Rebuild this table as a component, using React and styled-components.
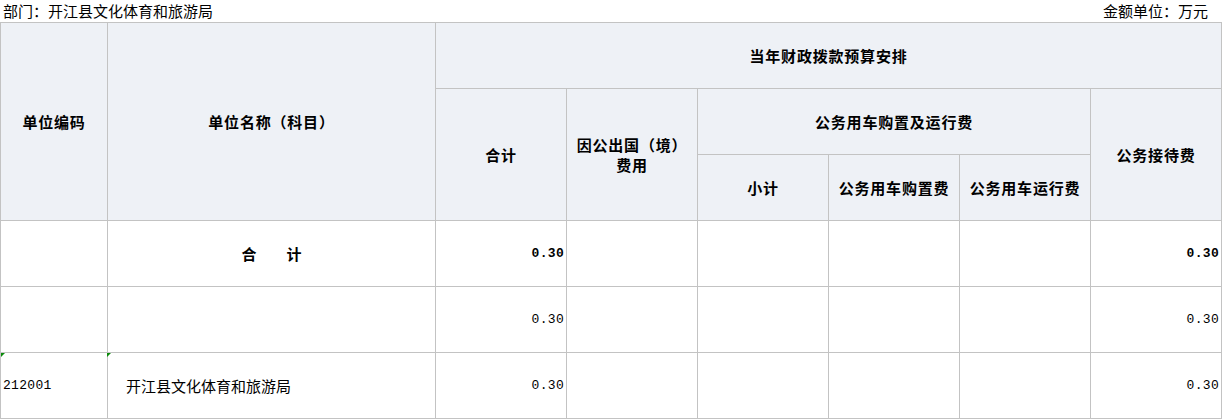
import React from "react";
import styled, { createGlobalStyle } from "styled-components";

const Global = createGlobalStyle`
  html, body { margin: 0; padding: 0; background: #fff; }
  body { font-family: "Noto Sans CJK SC", "Liberation Sans", sans-serif; color: #000; }
`;

const Page = styled.div`
  width: 1222px;
`;

const TitleBar = styled.div`
  height: 22px;
  display: flex;
  align-items: center;
  justify-content: space-between;
  padding: 0 14px 0 3px;
  font-size: 15px;
  line-height: 22px;
  box-sizing: border-box;
`;

const Grid = styled.div`
  display: grid;
  grid-template-columns: 106px 327px repeat(6, 130px);
  grid-template-rows: repeat(6, 65px);
  gap: 1px;
  padding: 1px;
  background: #c3c3c3;
  width: 1222px;
  box-sizing: border-box;
`;

const Cell = styled.div`
  position: relative;
  grid-column: ${(p) => p.$col} / span ${(p) => p.$cs || 1};
  grid-row: ${(p) => p.$row} / span ${(p) => p.$rs || 1};
  background: ${(p) => (p.$head ? "#eef1f6" : "#fff")};
  display: flex;
  align-items: center;
  justify-content: ${(p) =>
    p.$align === "right" ? "flex-end" : p.$align === "left" ? "flex-start" : "center"};
  text-align: ${(p) => p.$align || "center"};
  padding: ${(p) => p.$pad || "0"};
  font-size: 15px;
  font-weight: ${(p) => (p.$bold ? 700 : 400)};
  letter-spacing: ${(p) => (p.$head ? "0.8px" : "0")};
  line-height: 20px;
  box-sizing: border-box;
`;

const Num = styled.span`
  font-family: "Liberation Mono", monospace;
  font-size: 13px;
  font-weight: ${(p) => (p.$bold ? 700 : 400)};
  letter-spacing: 0.3px;
`;

const Marker = styled.span`
  position: absolute;
  top: 0;
  left: ${(p) => p.$left || 0}px;
  width: 0;
  height: 0;
  border-top: 4px solid #0a8a0a;
  border-right: 4px solid transparent;
`;

const rows = [
  { code: "", name: "合　　计", total: "0.30", recept: "0.30", bold: true },
  { code: "", name: "", total: "0.30", recept: "0.30" },
  { code: "212001", name: "开江县文化体育和旅游局", total: "0.30", recept: "0.30", marker: true },
];

export default function App() {
  return (
    <Page>
      <Global />
      <TitleBar>
        <span>部门：开江县文化体育和旅游局</span>
        <span>金额单位：万元</span>
      </TitleBar>
      <Grid>
        <Cell $head $bold $col={1} $row={1} $rs={3}>单位编码</Cell>
        <Cell $head $bold $col={2} $row={1} $rs={3}>单位名称（科目）</Cell>
        <Cell $head $bold $col={3} $row={1} $cs={6}>当年财政拨款预算安排</Cell>
        <Cell $head $bold $col={3} $row={2} $rs={2}>合计</Cell>
        <Cell $head $bold $col={4} $row={2} $rs={2}>因公出国（境）<br />费用</Cell>
        <Cell $head $bold $col={5} $row={2} $cs={3}>公务用车购置及运行费</Cell>
        <Cell $head $bold $col={8} $row={2} $rs={2}>公务接待费</Cell>
        <Cell $head $bold $col={5} $row={3}>小计</Cell>
        <Cell $head $bold $col={6} $row={3}>公务用车购置费</Cell>
        <Cell $head $bold $col={7} $row={3}>公务用车运行费</Cell>

        {rows.map((r, i) => {
          const row = 4 + i;
          return (
            <React.Fragment key={i}>
              <Cell $col={1} $row={row} $align="left" $pad="0 0 0 2px">
                {r.marker && <Marker />}
                <Num>{r.code}</Num>
              </Cell>
              <Cell
                $col={2}
                $row={row}
                $bold={r.bold}
                $align={r.bold ? "center" : "left"}
                $pad={r.bold ? "0" : "0 0 0 18px"}
              >
                {r.marker && <Marker $left={-1} />}
                {r.name}
              </Cell>
              <Cell $col={3} $row={row} $align="right" $pad="0 2px 0 0">
                <Num $bold={r.bold}>{r.total}</Num>
              </Cell>
              <Cell $col={4} $row={row} />
              <Cell $col={5} $row={row} />
              <Cell $col={6} $row={row} />
              <Cell $col={7} $row={row} />
              <Cell $col={8} $row={row} $align="right" $pad="0 2px 0 0">
                <Num $bold={r.bold}>{r.recept}</Num>
              </Cell>
            </React.Fragment>
          );
        })}
      </Grid>
    </Page>
  );
}
